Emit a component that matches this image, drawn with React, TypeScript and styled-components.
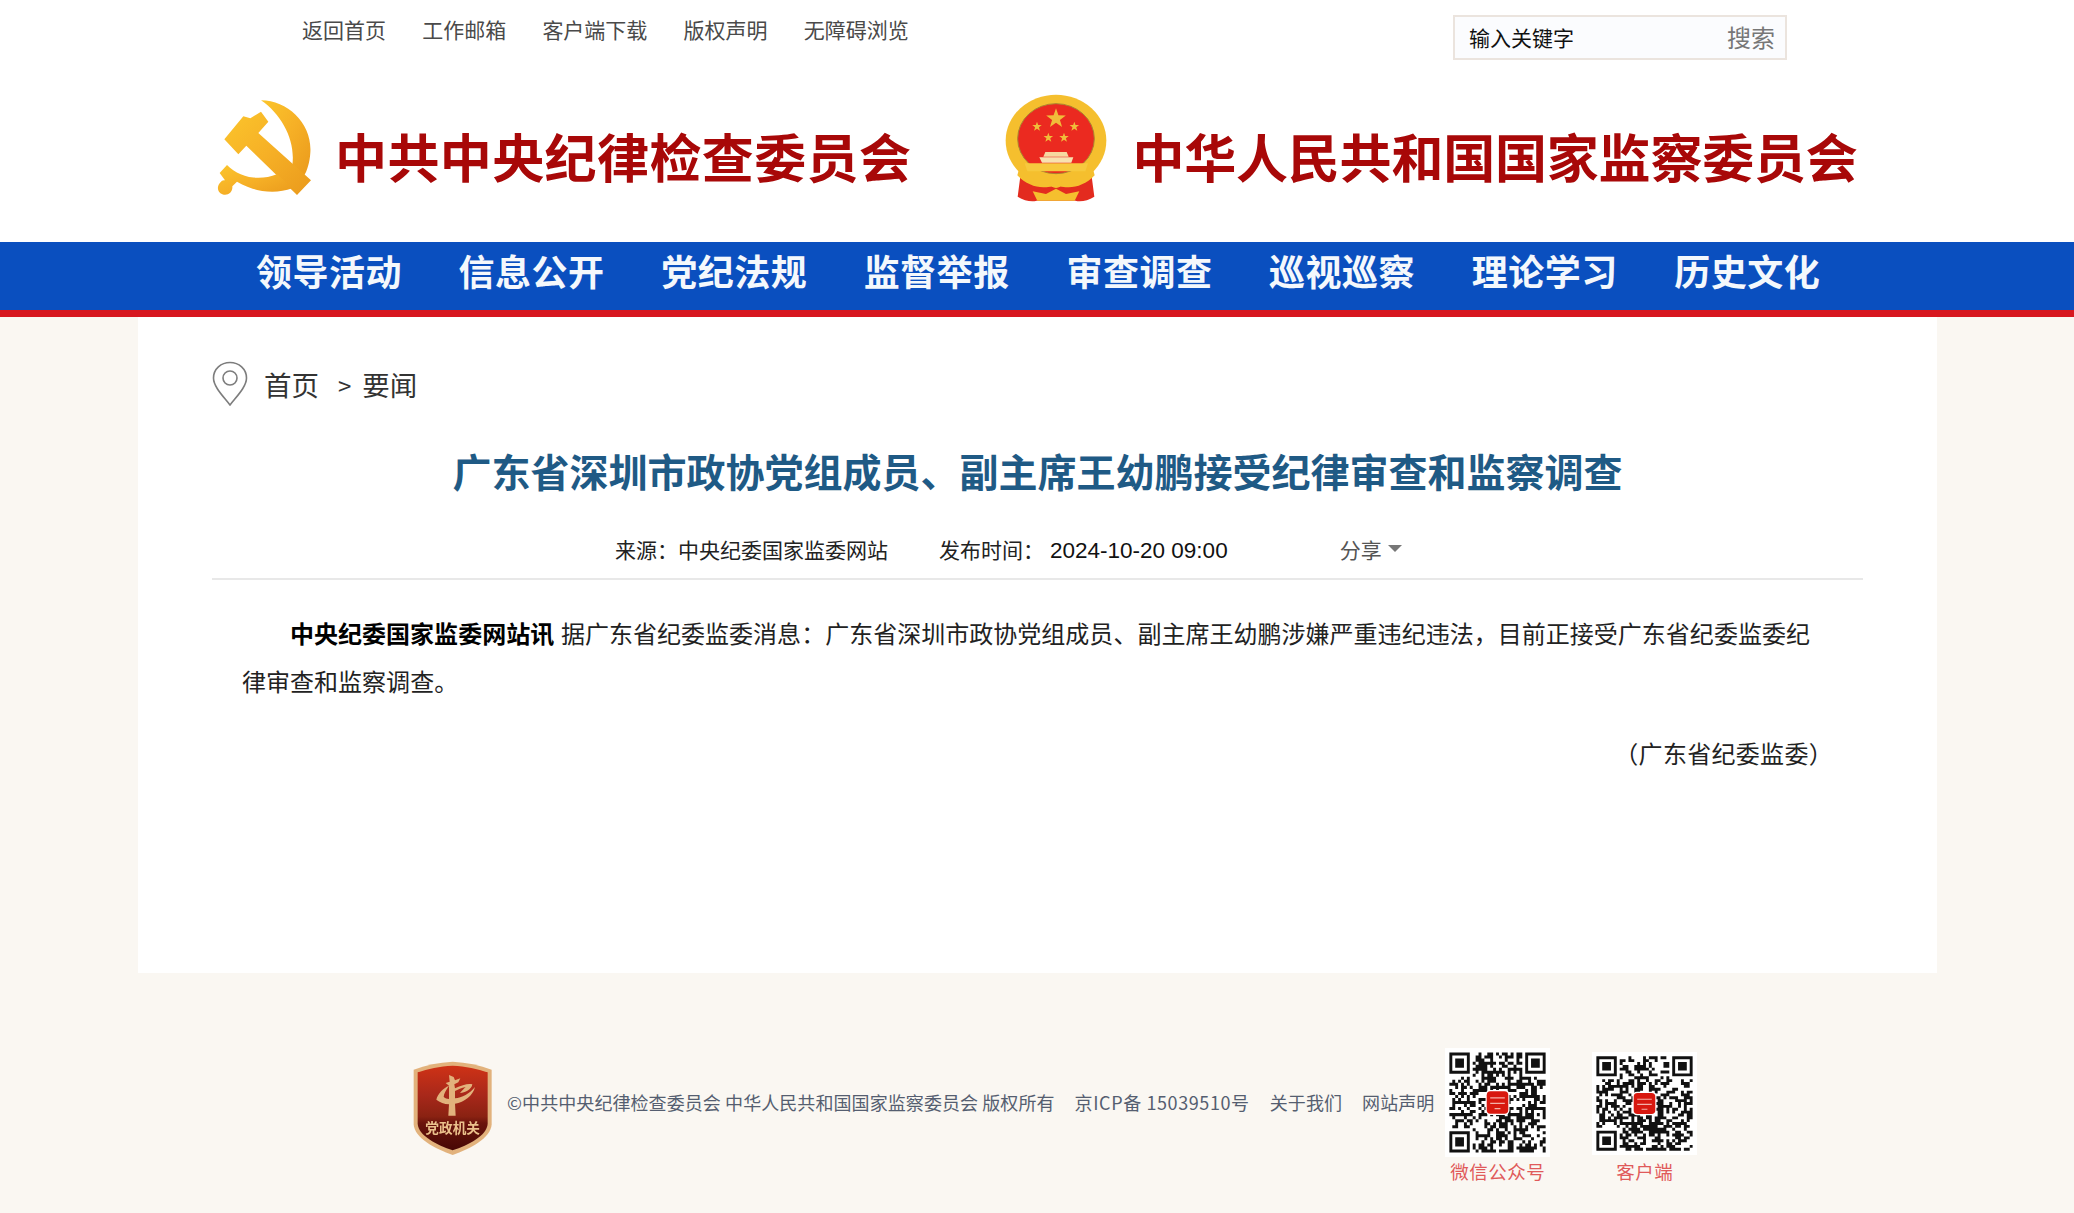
import styled, { createGlobalStyle } from 'styled-components';

const NAV_ITEMS = ['领导活动', '信息公开', '党纪法规', '监督举报', '审查调查', '巡视巡察', '理论学习', '历史文化'];
const TOP_LINKS = ['返回首页', '工作邮箱', '客户端下载', '版权声明', '无障碍浏览'];
const CN_FONT = '"Noto Sans CJK SC", "Microsoft YaHei", sans-serif';

const GlobalStyle = createGlobalStyle`
    html, body {
        margin: 0;
        padding: 0;
        background: #faf7f2;
        font-family: ${CN_FONT};
    }
`;

const HammerSickle = () => (
    <LogoSvg width={120} height={115} viewBox="0 0 360 345">
        <defs>
            <linearGradient id="gold" x1="0" y1="0" x2="1" y2="1">
                <stop offset="0" stopColor="#fbc52c" />
                <stop offset="0.5" stopColor="#f6b026" />
                <stop offset="1" stopColor="#ea9a1c" />
            </linearGradient>
        </defs>
        <path
            fill="url(#gold)"
            d="M168 28 C250 28 322 100 316 185 C314 215 306 240 296 256 L262 222 C272 150 232 72 168 28 Z"
        />
        <path
            fill="url(#gold)"
            d="M58 145 L115 76 L136 82 L168 62 L190 92 L160 126 L318 268 L276 312 L124 164 L100 190 Z"
        />
        <path
            fill="url(#gold)"
            d="M66 222 C100 258 160 272 216 250 L262 292 C210 310 150 304 96 272 L82 286 C84 304 68 316 52 310 C36 304 34 284 48 272 C52 268 56 268 60 268 L44 246 Z"
        />
    </LogoSvg>
);

const Star = ({ x, y, r }: { x: number; y: number; r: number }) => {
    const points = Array.from({ length: 10 }, (_, i) => {
        const a = (Math.PI / 5) * i - Math.PI / 2;
        const d = i % 2 === 0 ? r : r * 0.4;
        return `${x + d * Math.cos(a)},${y + d * Math.sin(a)}`;
    }).join(' ');
    return <polygon points={points} fill="#f0bd3a" />;
};

const Emblem = () => (
    <LogoSvg width={120} height={120} viewBox="0 0 360 360">
        <path fill="#e32b1f" d="M75 250 L65 326 C85 338 105 342 122 338 L238 338 C255 342 275 338 295 326 L285 250 L240 290 L120 290 Z" />
        <ellipse cx="180" cy="158" rx="151" ry="138" fill="#f5bf2e" />
        <ellipse cx="180" cy="152" rx="115" ry="105" fill="#eb2a20" stroke="#a98430" strokeWidth="3" />
        <Star x={180} y={92} r={31} />
        <Star x={123} y={116} r={15} />
        <Star x={235} y={116} r={15} />
        <Star x={157} y={149} r={15} />
        <Star x={204} y={149} r={15} />
        <path fill="#f6d9a0" d="M148 192 L212 192 L218 206 L142 206 Z" />
        <path fill="#f8e2b0" d="M130 208 L232 208 L226 224 L138 224 Z" />
        <path fill="#f7c93e" d="M86 226 L276 226 L268 250 L94 250 Z" />
        <path fill="#f5bf2e" d="M70 240 C110 280 140 290 180 262 C220 290 250 280 290 240 L296 262 C260 300 215 305 180 290 C145 305 100 300 64 262 Z" />
        <path fill="#f5bf2e" d="M110 310 L150 318 L180 302 L210 318 L250 310 L236 338 L124 338 Z" />
        <circle cx="180" cy="282" r="18" fill="#f5bf2e" />
    </LogoSvg>
);

const PartyBadge = () => (
    <BadgeSvg width={95} height={105} viewBox="0 0 285 315">
        <defs>
            <linearGradient id="shield" x1="0" y1="0" x2="0" y2="1">
                <stop offset="0" stopColor="#cf3216" />
                <stop offset="0.35" stopColor="#a8281a" />
                <stop offset="0.6" stopColor="#8a2212" />
                <stop offset="0.68" stopColor="#6a140c" />
                <stop offset="1" stopColor="#470805" />
            </linearGradient>
        </defs>
        <path fill="#e2b27c" d="M143 20 C185 22 225 30 260 44 L260 208 C258 250 195 282 143 300 C91 282 28 250 26 208 L26 44 C61 30 101 22 143 20 Z" />
        <path fill="url(#shield)" d="M143 32 C182 34 218 42 248 52 L248 206 C246 242 190 270 143 286 C96 270 40 242 38 206 L38 52 C68 42 104 34 143 32 Z" />
        <path
            fill="#e2b27c"
            d="M132 60 L146 66 L150 76 L166 70 L160 82 L148 88 L150 100 C172 90 190 84 202 88 C200 104 180 114 165 114 C172 106 178 100 182 96 C170 98 158 104 150 108 L150 130 C170 128 195 116 210 96 C204 122 178 142 150 146 L152 182 L130 182 L132 148 C118 148 104 142 94 134 C98 116 114 100 132 92 C124 104 116 116 116 126 C120 130 126 132 132 132 L132 92 L122 84 L134 80 Z"
        />
        <text x="143" y="234" textAnchor="middle" fontSize="41" fontWeight="700" fill="#ebc18c" fontFamily={CN_FONT}>
            党政机关
        </text>
    </BadgeSvg>
);

const finder = (x: number, y: number) => `M${x} ${y}h7v7h-7zM${x + 1} ${y + 1}v5h5v-5zM${x + 2} ${y + 2}h3v3h-3z`;

const QrCode = ({ seed, height, top }: { seed: number; height: number; top: number }) => {
    const n = 33;
    let s = seed;
    let path = finder(0, 0) + finder(26, 0) + finder(0, 26);
    for (let y = 0; y < n; y++) {
        for (let x = 0; x < n; x++) {
            s = (s * 1103515245 + 12345) & 0x7fffffff;
            const inFinder = (x < 8 && y < 8) || (x > 24 && y < 8) || (x < 8 && y > 24);
            if (!inFinder && (s >> 16) % 100 < 54) path += `M${x} ${y}h1v1h-1z`;
        }
    }
    return (
        <QrSvg $top={top} width={105} height={height} viewBox="-1.500 -1.500 36 36" preserveAspectRatio="none">
            <rect x="-1.500" y="-1.500" width="36" height="36" fill="#fff" />
            <path d={path} fill="#111" fillRule="evenodd" />
            <rect x="12.4" y="12.4" width="8.200" height="8.200" rx="1.500" fill="#fff" />
            <rect x="12.800" y="12.800" width="7.400" height="7.400" rx="1.300" fill="#d8180f" />
            <path d="M14 15h5M14 16.800h5M15.500 18.500h2" stroke="#f3b0a8" strokeWidth="0.4" />
        </QrSvg>
    );
};

const LocationPin = () => (
    <PinSvg width={36} height={46} viewBox="0 0 36 46">
        <path
            fill="none"
            stroke="#7d7d7d"
            strokeWidth="1.6"
            d="M18 44 C12 36 1.5 26 1.5 17 C1.5 8 9 1.5 18 1.5 C27 1.5 34.500 8 34.500 17 C34.500 26 24 36 18 44 Z"
        />
        <circle cx="18" cy="17" r="7" fill="none" stroke="#7d7d7d" strokeWidth="1.6" />
    </PinSvg>
);

export default function App() {
    return (
        <Page>
            <GlobalStyle />
            <Header>
                <TopBar>
                    <TopLinks>
                        {TOP_LINKS.map((link) => (
                            <TopLink key={link}>{link}</TopLink>
                        ))}
                    </TopLinks>
                    <SearchBox>
                        <SearchHint>输入关键字</SearchHint>
                        <SearchButton>搜索</SearchButton>
                    </SearchBox>
                </TopBar>
                <Branding>
                    <BrandGroup $gap={10}>
                        <HammerSickle />
                        <BrandName $spacing={0.4}>中共中央纪律检查委员会</BrandName>
                    </BrandGroup>
                    <BrandGroup $gap={16}>
                        <Emblem />
                        <BrandName $spacing={-0.2}>中华人民共和国国家监察委员会</BrandName>
                    </BrandGroup>
                </Branding>
            </Header>
            <Nav>
                {NAV_ITEMS.map((item) => (
                    <NavItem key={item}>{item}</NavItem>
                ))}
            </Nav>
            <Panel>
                <Breadcrumb>
                    <LocationPin />
                    <CrumbText>首页</CrumbText>
                    <CrumbSep>&gt;</CrumbSep>
                    <CrumbText>要闻</CrumbText>
                </Breadcrumb>
                <Title>广东省深圳市政协党组成员、副主席王幼鹏接受纪律审查和监察调查</Title>
                <Meta>
                    <Source>来源：中央纪委国家监委网站</Source>
                    <Published>
                        发布时间：<PublishedTime>2024-10-20 09:00</PublishedTime>
                    </Published>
                    <Share>
                        分享<ShareCaret />
                    </Share>
                </Meta>
                <Article>
                    <Paragraph>
                        <strong>中央纪委国家监委网站讯</strong> 据广东省纪委监委消息：广东省深圳市政协党组成员、副主席王幼鹏涉嫌严重违纪违法，目前正接受广东省纪委监委纪律审查和监察调查。
                    </Paragraph>
                    <Origin>（广东省纪委监委）</Origin>
                </Article>
            </Panel>
            <Footer>
                <PartyBadge />
                <FooterText>
                    <span>©中共中央纪律检查委员会 中华人民共和国国家监察委员会 版权所有</span>
                    <IcpText>京ICP备 15039510号</IcpText>
                    <span>关于我们</span>
                    <span>网站声明</span>
                </FooterText>
                <QrGroup>
                    <QrBlock>
                        <QrCode seed={17} height={109} top={0} />
                        <QrLabel>微信公众号</QrLabel>
                    </QrBlock>
                    <QrBlock>
                        <QrCode seed={91} height={103} top={4} />
                        <QrLabel>客户端</QrLabel>
                    </QrBlock>
                </QrGroup>
            </Footer>
        </Page>
    );
}

const Page = styled.div`
    width: 2074px;
    height: 1213px;
    overflow: hidden;
    background: #faf7f2;
    color: #333;
`;

const Header = styled.header`
    background: #fff;
    height: 242px;
    box-sizing: border-box;
`;

const TopBar = styled.div`
    display: flex;
    justify-content: space-between;
    align-items: flex-start;
    padding: 15px 287px 0 302px;
`;

const TopLinks = styled.div`
    display: flex;
    gap: 36.2px;
`;

const TopLink = styled.span`
    font-size: 21px;
    line-height: 28px;
    color: #4a4a4a;
`;

const SearchBox = styled.div`
    display: flex;
    justify-content: space-between;
    align-items: center;
    box-sizing: border-box;
    width: 334px;
    height: 45px;
    padding: 0 10px 2px 14px;
    background: #fbfcfe;
    border: 2px solid #ebe4de;
`;

const SearchHint = styled.span`
    font-size: 21px;
    color: #111;
`;

const SearchButton = styled.span`
    font-size: 24px;
    color: #777;
`;

const Branding = styled.div`
    display: flex;
    padding: 28px 0 0 205px;
    gap: 85px;
`;

const BrandGroup = styled.div<{ $gap: number }>`
    display: flex;
    align-items: center;
    gap: ${(props) => props.$gap}px;
`;

const LogoSvg = styled.svg`
    flex: none;
    filter: blur(0.4px);
`;

const BrandName = styled.span<{ $spacing: number }>`
    font-size: 52px;
    line-height: 60px;
    font-weight: 700;
    letter-spacing: ${(props) => props.$spacing}px;
    color: #a80808;
    white-space: nowrap;
    margin-top: 15px;
`;

const Nav = styled.nav`
    display: flex;
    gap: 56.6px;
    height: 68px;
    padding-left: 256px;
    background: #0a4fbf;
    border-bottom: 7px solid #d7171f;
`;

const NavItem = styled.span`
    font-size: 36px;
    line-height: 57px;
    font-weight: 700;
    letter-spacing: 0.5px;
    color: #f4f8fc;
`;

const Panel = styled.main`
    box-sizing: border-box;
    width: 1799px;
    height: 656px;
    margin-left: 138px;
    padding: 43px 74px 0;
    background: #fff;
`;

const Breadcrumb = styled.div`
    display: flex;
    align-items: center;
    height: 48px;
`;

const PinSvg = styled.svg`
    margin-right: 16px;
`;

const CrumbText = styled.span`
    font-size: 27.5px;
    color: #333;
`;

const CrumbSep = styled.span`
    margin: 0 11px 0 19px;
    font-size: 24px;
    color: #333;
`;

const Title = styled.h1`
    margin: 34px 0 0;
    font-size: 39px;
    line-height: 56px;
    font-weight: 700;
    text-align: center;
    color: #1f5a85;
`;

const Meta = styled.div`
    display: flex;
    align-items: center;
    height: 59px;
    margin-top: 23px;
    padding: 0 0 2px 403px;
    border-bottom: 2px solid #e8e8e8;
    box-sizing: border-box;
    font-size: 21px;
    color: #222;
`;

const Source = styled.span`
    margin-right: 51px;
`;

const Published = styled.span`
    margin-right: 112px;
`;

const PublishedTime = styled.span`
    margin-left: 6px;
    font-family: "Liberation Sans", sans-serif;
    font-size: 22.5px;
    color: #111;
`;

const Share = styled.span`
    display: inline-flex;
    align-items: center;
    color: #555;
`;

const ShareCaret = styled.i`
    margin-left: 6px;
    border-style: solid;
    border-width: 7px 7px 0;
    border-color: #777 transparent transparent;
`;

const Article = styled.article`
    padding: 29px 40px 0 30px;
`;

const Paragraph = styled.p`
    margin: 0;
    font-size: 24px;
    line-height: 48px;
    letter-spacing: 0.02px;
    word-spacing: 1.3px;
    text-indent: 48px;
    color: #222;

    strong {
        color: #000;
    }
`;

const Origin = styled.p`
    margin: 24px -10px 0 0;
    font-size: 24px;
    line-height: 48px;
    letter-spacing: 0.3px;
    text-align: right;
    color: #222;
`;

const Footer = styled.footer`
    display: flex;
    align-items: flex-start;
    padding: 82px 0 0 405px;
`;

const BadgeSvg = styled.svg`
    flex: none;
    filter: blur(0.4px);
`;

const FooterText = styled.div`
    display: flex;
    gap: 20px;
    margin: 34px 0 0 7px;
    font-size: 18px;
    line-height: 26px;
    letter-spacing: 0.08px;
    color: #555e70;
    white-space: nowrap;
`;

const IcpText = styled.span`
    letter-spacing: 0.6px;
`;

const QrGroup = styled.div`
    display: flex;
    gap: 42px;
    margin: -7px 0 0 11px;
`;

const QrBlock = styled.div`
    display: flex;
    flex-direction: column;
    align-items: center;
`;

const QrSvg = styled.svg<{ $top: number }>`
    margin-top: ${(props) => props.$top}px;
    filter: blur(0.5px);
`;

const QrLabel = styled.span`
    margin-top: auto;
    padding-top: 1px;
    font-size: 18.5px;
    line-height: 26px;
    letter-spacing: 0.5px;
    color: #e05a5a;
`;
